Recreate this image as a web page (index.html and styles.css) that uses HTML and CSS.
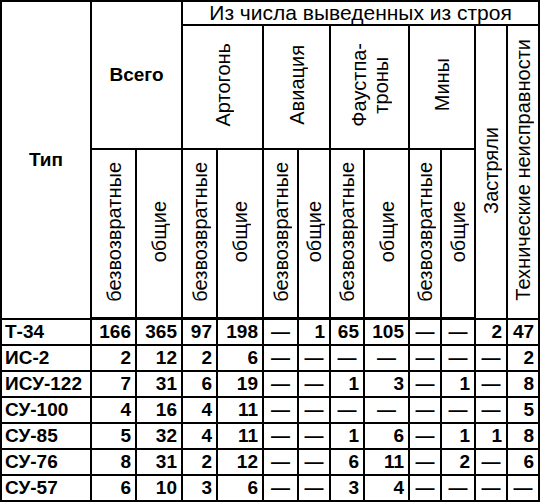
FILE: index.html
```html
<!DOCTYPE html>
<html lang="ru">
<head>
<meta charset="utf-8">
<title>Потери</title>
<link rel="stylesheet" href="styles.css">
</head>
<body>
<table class="losses">
  <colgroup>
    <col class="c-type">
    <col class="c45"><col class="c46">
    <col class="c35"><col class="c46">
    <col class="c35"><col class="c32">
    <col class="c34"><col class="c45">
    <col class="c32"><col class="c34">
    <col class="c32"><col class="c32">
  </colgroup>
  <thead>
    <tr class="h1">
      <th rowspan="3" class="bold">Тип</th>
      <th rowspan="2" colspan="2" class="bold">Всего</th>
      <th colspan="10" class="group">Из числа выведенных из строя</th>
    </tr>
    <tr class="h2">
      <th colspan="2"><span class="vt">Артогонь</span></th>
      <th colspan="2"><span class="vt">Авиация</span></th>
      <th colspan="2"><span class="vt">Фаустпа-<br>троны</span></th>
      <th colspan="2"><span class="vt">Мины</span></th>
      <th rowspan="2"><span class="vt">Застряли</span></th>
      <th rowspan="2"><span class="vt">Технические неисправности</span></th>
    </tr>
    <tr class="h3">
      <th><span class="vt">безвозвратные</span></th>
      <th><span class="vt">общие</span></th>
      <th><span class="vt">безвозвратные</span></th>
      <th><span class="vt">общие</span></th>
      <th><span class="vt">безвозвратные</span></th>
      <th><span class="vt">общие</span></th>
      <th><span class="vt">безвозвратные</span></th>
      <th><span class="vt">общие</span></th>
      <th><span class="vt">безвозвратные</span></th>
      <th><span class="vt">общие</span></th>
    </tr>
  </thead>
  <tbody>
    <tr><th>Т-34</th><td>166</td><td>365</td><td>97</td><td>198</td><td class="d">—</td><td>1</td><td>65</td><td>105</td><td class="d">—</td><td class="d">—</td><td>2</td><td>47</td></tr>
    <tr><th>ИС-2</th><td>2</td><td>12</td><td>2</td><td>6</td><td class="d">—</td><td class="d">—</td><td class="d">—</td><td class="d">—</td><td class="d">—</td><td class="d">—</td><td class="d">—</td><td>2</td></tr>
    <tr><th>ИСУ-122</th><td>7</td><td>31</td><td>6</td><td>19</td><td class="d">—</td><td class="d">—</td><td>1</td><td>3</td><td class="d">—</td><td>1</td><td class="d">—</td><td>8</td></tr>
    <tr><th>СУ-100</th><td>4</td><td>16</td><td>4</td><td>11</td><td class="d">—</td><td class="d">—</td><td class="d">—</td><td class="d">—</td><td class="d">—</td><td class="d">—</td><td class="d">—</td><td>5</td></tr>
    <tr><th>СУ-85</th><td>5</td><td>32</td><td>4</td><td>11</td><td class="d">—</td><td class="d">—</td><td>1</td><td>6</td><td class="d">—</td><td>1</td><td>1</td><td>8</td></tr>
    <tr><th>СУ-76</th><td>8</td><td>31</td><td>2</td><td>12</td><td class="d">—</td><td class="d">—</td><td>6</td><td>11</td><td class="d">—</td><td>2</td><td class="d">—</td><td>6</td></tr>
    <tr><th>СУ-57</th><td>6</td><td>10</td><td>3</td><td>6</td><td class="d">—</td><td class="d">—</td><td>3</td><td>4</td><td class="d">—</td><td class="d">—</td><td class="d">—</td><td class="d">—</td></tr>
  </tbody>
</table>
</body>
</html>
```

FILE: styles.css
```css
html, body {
  margin: 0;
  padding: 0;
  background: #fff;
}

.losses {
  border-collapse: separate;
  border-spacing: 0;
  table-layout: fixed;
  width: 540px;
  border-top: 2px solid #000;
  border-left: 2px solid #000;
  font-family: "Liberation Sans", Arial, sans-serif;
  font-size: 19px;
  color: #000;
}

.losses th,
.losses td {
  box-sizing: border-box;
  border-right: 2px solid #000;
  border-bottom: 2px solid #000;
  padding: 0;
  overflow: hidden;
  white-space: nowrap;
  line-height: 1.1;
}

.c-type { width: 90px; }
.c45 { width: 45px; }
.c46 { width: 46px; }
.c35 { width: 35px; }
.c34 { width: 34px; }
.c32 { width: 32px; }

.losses thead th {
  font-weight: normal;
  font-size: 20px;
  text-align: center;
  vertical-align: middle;
}

.losses thead th.bold {
  font-weight: bold;
  font-size: 19px;
}

.h1 { height: 24px; }
.h2 { height: 124px; }
.h3 { height: 170px; }

.losses thead tr.h3 th {
  border-bottom-width: 3px;
}

.losses thead th.group {
  font-size: 21px;
  line-height: 22px;
}

.vt {
  display: inline-block;
  writing-mode: vertical-rl;
  transform: rotate(180deg);
  text-align: center;
  line-height: 1.1;
}

.losses tbody tr {
  height: 26px;
}

.losses tbody th {
  font-weight: bold;
  text-align: left;
  padding-left: 3px;
}

.losses tbody td {
  font-weight: bold;
  text-align: right;
  padding-right: 4px;
}

.losses tbody td.d {
  text-align: center;
  padding-right: 0;
}
```
